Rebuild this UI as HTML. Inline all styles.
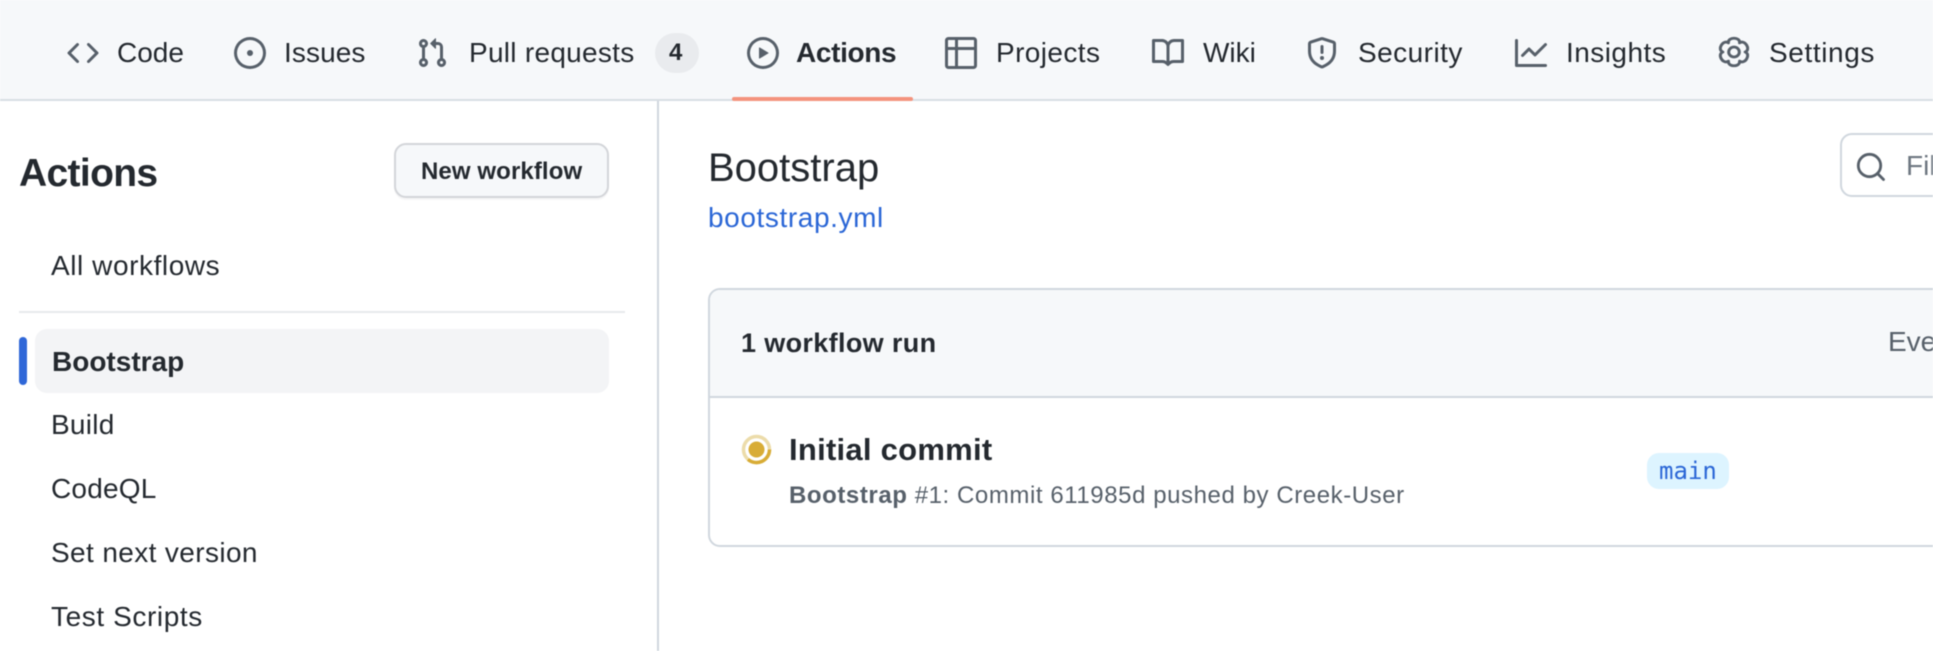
<!DOCTYPE html>
<html lang="en"><head><meta charset="utf-8"><title>Actions</title>
<style>
html,body{margin:0;padding:0;background:#fff}
#p{position:relative;width:1933px;height:651px;overflow:hidden;background:#fff;font-family:"Liberation Sans",sans-serif;color:#24292f;filter:blur(.4px)}
.t{position:absolute;white-space:nowrap;line-height:40px;font-size:28px}
.b{font-weight:700}
.a{position:absolute}
svg.i{position:absolute;width:32px;height:32px;fill:#57606a}
</style></head><body><div id="p">
<div class="a" style="left:0;top:0;width:1933px;height:99px;background:#f6f8fa"></div>
<div class="a" style="left:0;top:99px;width:1933px;height:2px;background:#d8dee4"></div>
<div class="a" style="left:732px;top:97px;width:181px;height:4px;background:#f4937d;border-radius:2px"></div>

<svg class="i" viewBox="0 0 16 16" style="left:67px;top:37px"><path d="m11.28 3.22 4.25 4.25a.75.75 0 0 1 0 1.06l-4.25 4.25a.749.749 0 0 1-1.275-.326.749.749 0 0 1 .215-.734L13.94 8l-3.72-3.72a.749.749 0 0 1 .326-1.275.749.749 0 0 1 .734.215Zm-6.56 0a.751.751 0 0 1 1.042.018.751.751 0 0 1 .018 1.042L2.06 8l3.72 3.72a.749.749 0 0 1-.326 1.275.749.749 0 0 1-.734-.215L.47 8.53a.75.75 0 0 1 0-1.06Z"/></svg>
<span class="t" style="left:117px;top:33px">Code</span>
<svg class="i" viewBox="0 0 16 16" style="left:234px;top:37px"><path d="M8 9.5a1.5 1.5 0 1 0 0-3 1.5 1.5 0 0 0 0 3Z"/><path d="M8 0a8 8 0 1 1 0 16A8 8 0 0 1 8 0ZM1.5 8a6.5 6.5 0 1 0 13 0 6.5 6.5 0 0 0-13 0Z"/></svg>
<span class="t" style="left:284px;top:33px;letter-spacing:.1px">Issues</span>
<svg class="i" viewBox="0 0 16 16" style="left:415.5px;top:37px"><path d="M1.5 3.25a2.25 2.25 0 1 1 3 2.122v5.256a2.251 2.251 0 1 1-1.5 0V5.372A2.25 2.25 0 0 1 1.5 3.25Zm5.677-.177L9.573.677A.25.25 0 0 1 10 .854V2.5h1A2.5 2.5 0 0 1 13.5 5v5.628a2.251 2.251 0 1 1-1.5 0V5a1 1 0 0 0-1-1h-1v1.646a.25.25 0 0 1-.427.177L7.177 3.427a.25.25 0 0 1 0-.354ZM3.75 2.5a.75.75 0 1 0 0 1.5.75.75 0 0 0 0-1.5Zm0 9.5a.75.75 0 1 0 0 1.5.75.75 0 0 0 0-1.5Zm8.25.75a.75.75 0 1 0 1.5 0 .75.75 0 0 0-1.5 0Z"/></svg>
<span class="t" style="left:469px;top:33px;letter-spacing:.28px">Pull requests</span>
<div class="a" style="left:655px;top:33px;width:44px;height:40px;border-radius:20px;background:#e9ebee"></div>
<span class="t b" style="left:669px;top:33px;font-size:24px;color:#24292f">4</span>
<svg class="i" viewBox="0 0 16 16" style="left:747px;top:37px"><path d="M8 0a8 8 0 1 1 0 16A8 8 0 0 1 8 0ZM1.5 8a6.5 6.5 0 1 0 13 0 6.5 6.5 0 0 0-13 0Zm4.879-2.773 4.264 2.559a.25.25 0 0 1 0 .428l-4.264 2.559A.25.25 0 0 1 6 10.559V5.442a.25.25 0 0 1 .379-.215Z"/></svg>
<span class="t b" style="left:796px;top:33px;letter-spacing:-.35px">Actions</span>
<svg class="i" viewBox="0 0 16 16" style="left:945px;top:37px"><path d="M0 1.75C0 .784.784 0 1.75 0h12.5C15.216 0 16 .784 16 1.75v12.5A1.75 1.75 0 0 1 14.25 16H1.75A1.75 1.75 0 0 1 0 14.25ZM6.5 6.5v8h7.75a.25.25 0 0 0 .25-.25V6.5Zm8-1.5V1.75a.25.25 0 0 0-.25-.25H6.5V5Zm-13 1.5v7.75c0 .138.112.25.25.25H5v-8ZM5 5V1.5H1.75a.25.25 0 0 0-.25.25V5Z"/></svg>
<span class="t" style="left:996px;top:33px;letter-spacing:.4px">Projects</span>
<svg class="i" viewBox="0 0 16 16" style="left:1152px;top:37px"><path d="M0 1.75A.75.75 0 0 1 .75 1h4.253c1.227 0 2.317.59 3 1.501A3.743 3.743 0 0 1 11.006 1h4.245a.75.75 0 0 1 .75.75v10.5a.75.75 0 0 1-.75.75h-4.507a2.25 2.25 0 0 0-1.591.659l-.622.621a.75.75 0 0 1-1.06 0l-.622-.621A2.25 2.25 0 0 0 5.258 13H.75a.75.75 0 0 1-.75-.75Zm7.251 10.324.004-5.073-.002-2.253A2.25 2.25 0 0 0 5.003 2.5H1.5v9h3.757a3.75 3.75 0 0 1 1.994.574ZM8.755 4.75l-.004 7.322a3.752 3.752 0 0 1 1.992-.572H14.5v-9h-3.495a2.25 2.25 0 0 0-2.25 2.25Z"/></svg>
<span class="t" style="left:1203px;top:33px">Wiki</span>
<svg class="i" viewBox="0 0 16 16" style="left:1306px;top:37px"><path d="M7.467.133a1.748 1.748 0 0 1 1.066 0l5.25 1.68A1.75 1.75 0 0 1 15 3.48V7c0 1.566-.32 3.182-1.303 4.682-.983 1.498-2.585 2.813-5.032 3.855a1.697 1.697 0 0 1-1.33 0c-2.447-1.042-4.049-2.357-5.032-3.855C1.32 10.182 1 8.566 1 7V3.48a1.75 1.75 0 0 1 1.217-1.667Zm.61 1.429a.25.25 0 0 0-.153 0l-5.25 1.68a.25.25 0 0 0-.174.238V7c0 1.358.275 2.666 1.057 3.86.784 1.194 2.121 2.34 4.366 3.297a.196.196 0 0 0 .154 0c2.245-.956 3.582-2.104 4.366-3.298C13.225 9.666 13.5 8.36 13.5 7V3.48a.251.251 0 0 0-.174-.237l-5.25-1.68ZM8.75 4.75v3a.75.75 0 0 1-1.5 0v-3a.75.75 0 0 1 1.5 0ZM9 10.5a1 1 0 1 1-2 0 1 1 0 0 1 2 0Z"/></svg>
<span class="t" style="left:1358px;top:33px;letter-spacing:.46px">Security</span>
<svg class="i" viewBox="0 0 16 16" style="left:1515px;top:37px"><path d="M1.5 1.75V13.5h13.75a.75.75 0 0 1 0 1.5H.75a.75.75 0 0 1-.75-.75V1.75a.75.75 0 0 1 1.5 0Zm14.28 2.53-5.25 5.25a.75.75 0 0 1-1.06 0L7 7.06 4.28 9.78a.751.751 0 0 1-1.042-.018.751.751 0 0 1-.018-1.042l3.25-3.25a.75.75 0 0 1 1.06 0L10 7.94l4.72-4.72a.751.751 0 0 1 1.042.018.751.751 0 0 1 .018 1.042Z"/></svg>
<span class="t" style="left:1566px;top:33px;letter-spacing:.46px">Insights</span>
<svg class="a" viewBox="0 0 32 32" preserveAspectRatio="none" style="left:1717px;top:36px;width:34px;height:32px;overflow:visible"><path d="M10.75 6.91C9.82 .7 22.18 .7 21.25 6.91C26.16 3 32.34 13.7 26.5 16C32.34 18.3 26.16 29 21.25 25.09C22.18 31.3 9.82 31.3 10.75 25.09C5.84 29 -.34 18.3 5.5 16C-.34 13.7 5.84 3 10.75 6.91Z" fill="none" stroke="#57606a" stroke-width="2.8" stroke-linejoin="round"/><circle cx="16" cy="16" r="5" fill="none" stroke="#57606a" stroke-width="2.8"/></svg>
<span class="t" style="left:1769px;top:33px;letter-spacing:.6px">Settings</span>

<div class="a" style="left:657px;top:101px;width:2px;height:550px;background:#d0d7de"></div>

<span class="t b" style="left:19px;top:154px;font-size:39px;line-height:40px;letter-spacing:-.65px">Actions</span>
<div class="a" style="left:394px;top:143px;width:215px;height:55px;box-sizing:border-box;background:#f6f8fa;border:2px solid #d3d5d9;border-radius:12px;box-shadow:0 2px 0 rgba(31,35,40,.04)"></div>
<span class="t b" style="left:421px;top:152px;font-size:24px;letter-spacing:.1px">New workflow</span>
<span class="t" style="left:51px;top:246px;letter-spacing:.57px">All workflows</span>
<div class="a" style="left:19px;top:311px;width:606px;height:2px;background:#e7e9ec"></div>
<div class="a" style="left:35px;top:329px;width:574px;height:64px;background:#f3f4f6;border-radius:12px"></div>
<div class="a" style="left:19px;top:337px;width:8px;height:48px;background:#2f67d8;border-radius:4px"></div>
<span class="t b" style="left:52px;top:342px">Bootstrap</span>
<span class="t" style="left:51px;top:405px;letter-spacing:.25px">Build</span>
<span class="t" style="left:51px;top:469px;letter-spacing:.2px">CodeQL</span>
<span class="t" style="left:51px;top:533px;letter-spacing:.38px">Set next version</span>
<span class="t" style="left:51px;top:597px;letter-spacing:.6px">Test Scripts</span>

<span class="t" style="left:708px;top:148px;font-size:40px">Bootstrap</span>
<span class="t" style="left:708px;top:198px;color:#2a66d6;letter-spacing:.6px">bootstrap.yml</span>
<div class="a" style="left:1840px;top:133px;width:140px;height:64px;box-sizing:border-box;border:2px solid #d0d7de;border-radius:12px;background:#fff"></div>
<svg class="a" viewBox="0 0 30 30" style="left:1856px;top:152px;width:30px;height:30px"><circle cx="13.5" cy="13.5" r="11.2" fill="none" stroke="#57606a" stroke-width="2.8"/><path d="M21.5 21.5L27.5 27.5" fill="none" stroke="#57606a" stroke-width="2.8" stroke-linecap="round"/></svg>
<span class="t" style="left:1906px;top:146px;color:#6e7781">Filter workflow runs</span>

<div class="a" style="left:708px;top:288px;width:1300px;height:259px;box-sizing:border-box;border:2px solid #d0d7de;border-radius:12px;background:#fff;overflow:hidden">
  <div style="height:106px;background:#f6f8fa;border-bottom:2px solid #d0d7de"></div>
</div>
<span class="t b" style="left:741px;top:323px;font-size:27px;letter-spacing:.35px">1 workflow run</span>
<span class="t" style="left:1888px;top:322px;color:#57606a">Event</span>

<svg class="a" style="left:741px;top:434px;width:31px;height:31px" viewBox="0 0 31 31"><circle cx="15.5" cy="15.5" r="13" fill="none" stroke="#ecdcaa" stroke-width="3.5"/><path d="M28.5 15.5A13 13 0 0 1 7 25.4" fill="none" stroke="#d8ac36" stroke-width="3.5"/><circle cx="15.5" cy="15.5" r="8" fill="#d8ac36"/></svg>
<span class="t b" style="left:789px;top:430px;font-size:31px;letter-spacing:.26px">Initial commit</span>
<span class="t" style="left:789px;top:476px;font-size:24px;color:#57606a;letter-spacing:.57px"><b>Bootstrap</b> #1: Commit 611985d pushed by Creek-User</span>
<div class="a" style="left:1647px;top:453px;width:82px;height:36px;background:#ddf4ff;border-radius:12px"></div>
<span class="t" style="left:1659px;top:451px;font-family:'DejaVu Sans Mono',monospace;font-size:24px;color:#2a66d6">main</span>
</div></body></html>
